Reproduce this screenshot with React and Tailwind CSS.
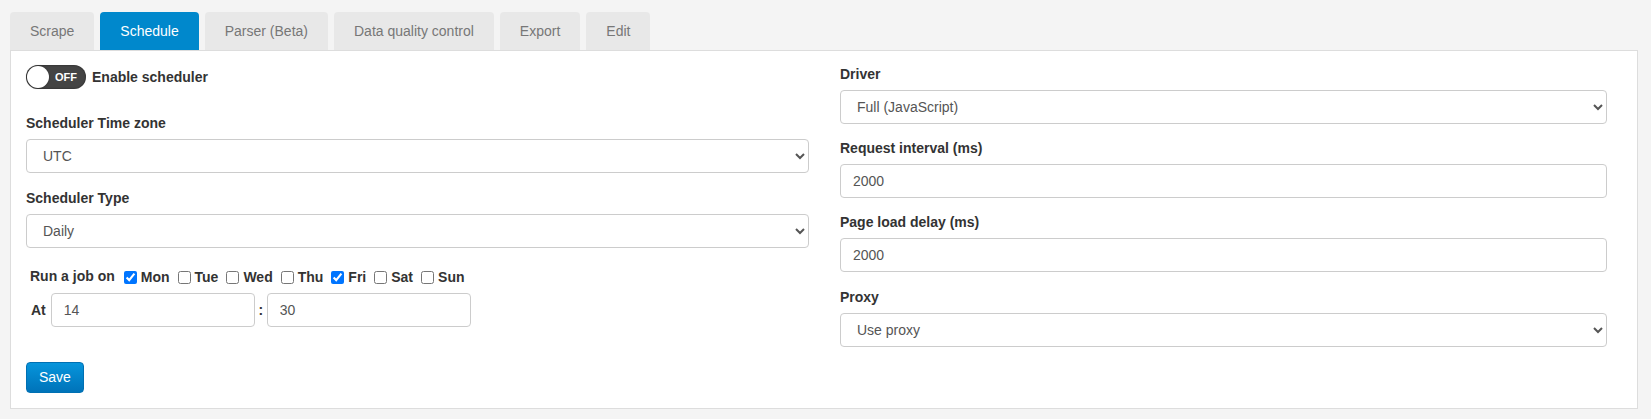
import React, { useState } from 'react';

const font = { fontFamily: '"Liberation Sans", Arial, Helvetica, sans-serif' };

const tabs = ["Scrape", "Schedule", "Parser (Beta)", "Data quality control", "Export", "Edit"];
const days = [
  { name: "Mon", on: true },
  { name: "Tue", on: false },
  { name: "Wed", on: false },
  { name: "Thu", on: false },
  { name: "Fri", on: true },
  { name: "Sat", on: false },
  { name: "Sun", on: false },
];

function Field({ label, children, className = "" }) {
  return (
    <div className={className}>
      <div className="text-[14px] font-bold text-[#333] leading-[20px] mb-[6px]">{label}</div>
      {children}
    </div>
  );
}

function Select({ value }) {
  return (
    <select
      className="w-full h-[34px] border border-[#ccc] rounded-[4px] bg-white text-[14px] font-normal text-[#555] pl-[12px] pr-[4px]"
      style={font}
      defaultValue={value}
    >
      <option>{value}</option>
    </select>
  );
}

function TextInput({ value, className = "w-full" }) {
  return (
    <input
      className={`${className} h-[34px] border border-[#ccc] rounded-[4px] bg-white text-[14px] font-normal text-[#555] px-[12px]`}
      style={font}
      defaultValue={value}
    />
  );
}

export default function App() {
  const [active] = useState("Schedule");

  return (
    <div className="w-[1651px] h-[419px] bg-[#f4f4f4] pt-[12px] pl-[10px]" style={font}>
      {/* Tabs */}
      <div className="flex gap-[6px]">
        {tabs.map((t) => (
          <div
            key={t}
            className={`h-[38px] px-[20px] flex items-center rounded-t-[4px] text-[14px] ${
              t === active ? "bg-[#0088cc] text-white" : "bg-[#e8e8e8] text-[#777]"
            }`}
          >
            {t}
          </div>
        ))}
      </div>

      {/* Panel */}
      <div className="w-[1628px] bg-white border border-[#ddd] flex pl-[15px] pt-[14px] pb-[15px]">
        {/* Left column */}
        <div className="w-[783px] flex flex-col">
          <div className="flex items-center gap-[6px] h-[24px]">
            <div className="w-[60px] h-[24px] rounded-full bg-[#444] flex items-center pl-[1px] shadow-[inset_0_0_2px_rgba(0,0,0,0.6)]">
              <div className="w-[22px] h-[22px] rounded-full bg-white shadow-[0_0_2px_rgba(0,0,0,0.5)]" />
              <span className="text-white text-[11px] font-bold ml-[6px]">OFF</span>
            </div>
            <span className="text-[14px] font-bold text-[#333]">Enable scheduler</span>
          </div>

          <Field label="Scheduler Time zone" className="mt-[24px]">
            <Select value="UTC" />
          </Field>

          <Field label="Scheduler Type" className="mt-[15px]">
            <Select value="Daily" />
          </Field>

          <div className="mt-[18px] pl-[4px] flex items-center h-[20px] text-[14px] font-bold text-[#333]">
            <span className="mr-[9px]">Run a job on</span>
            {days.map((d) => (
              <label key={d.name} className="flex items-center mr-[8px] mt-[3px]">
                <input type="checkbox" defaultChecked={d.on} className="w-[13px] h-[13px] m-0 mr-[4px]" />
                <span>{d.name}</span>
              </label>
            ))}
          </div>

          <div className="mt-[7px] pl-[5px] flex items-center text-[14px] font-bold text-[#333]">
            <span className="mr-[5px]">At</span>
            <TextInput value="14" className="w-[204px]" />
            <span className="w-[12px] text-center">:</span>
            <TextInput value="30" className="w-[204px]" />
          </div>

          <div className="mt-[35px]">
            <button
              className="h-[31px] px-[12px] rounded-[4px] text-white text-[14px] bg-gradient-to-b from-[#0795dc] to-[#0073b9] border border-[#0070b3]"
            >
              Save
            </button>
          </div>
        </div>

        {/* Right column */}
        <div className="w-[767px] ml-[31px] flex flex-col -mt-[1px]">
          <Field label="Driver">
            <Select value="Full (JavaScript)" />
          </Field>
          <Field label="Request interval (ms)" className="mt-[14px]">
            <TextInput value="2000" />
          </Field>
          <Field label="Page load delay (ms)" className="mt-[14px]">
            <TextInput value="2000" />
          </Field>
          <Field label="Proxy" className="mt-[15px]">
            <Select value="Use proxy" />
          </Field>
        </div>
      </div>
    </div>
  );
}
